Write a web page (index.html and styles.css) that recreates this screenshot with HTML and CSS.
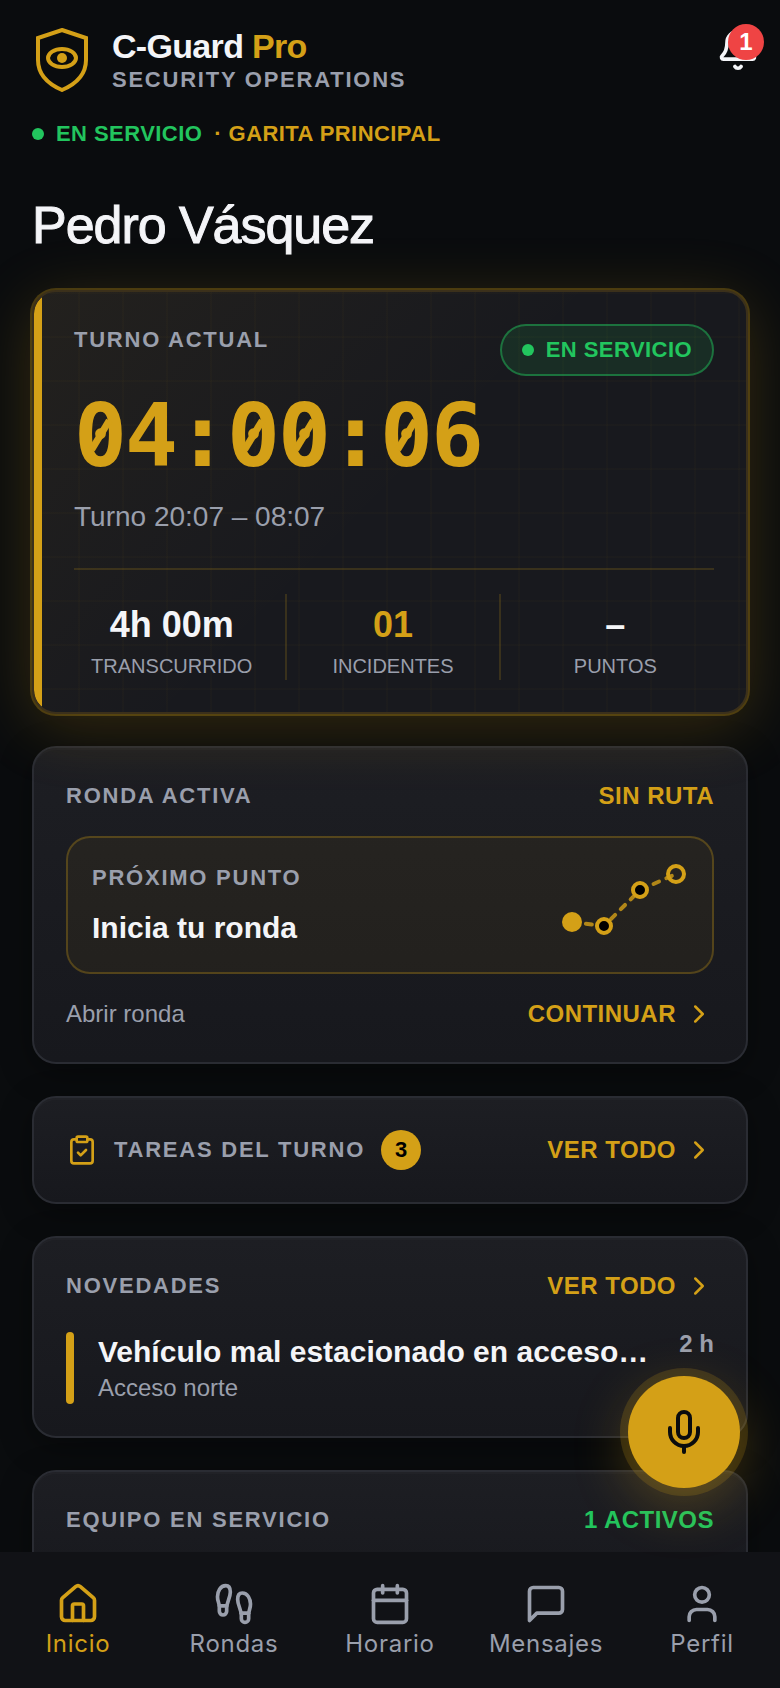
FILE: index.html
```html
<!DOCTYPE html>
<html lang="es">
<head>
  <meta charset="UTF-8">
  <meta name="viewport" content="width=device-width, initial-scale=1">
  <title>C-Guard Pro</title>
  <link rel="stylesheet" href="styles.css">
</head>
<body>

<div class="app">
  <main class="content">

    <header class="topbar">
      <svg class="logo" viewBox="0 0 60 64" fill="none" stroke="currentColor" stroke-width="4">
        <path d="M30 2L54 10V32C54 46 44 56 30 62C16 56 6 46 6 32V10Z"/>
        <ellipse cx="30" cy="30" rx="14" ry="9"/>
        <circle cx="30" cy="30" r="5" fill="currentColor" stroke="none"/>
      </svg>
      <div class="brand">
        <div class="brand-name">C-Guard <span>Pro</span></div>
        <div class="brand-sub">SECURITY OPERATIONS</div>
      </div>
      <button class="bell" aria-label="Notificaciones">
        <svg class="icon" viewBox="0 0 24 24">
          <path d="M10.3 21a2 2 0 0 0 3.4 0"/>
          <path d="M3.3 15.3A1 1 0 0 0 4 17h16a1 1 0 0 0 .7-1.7C19.4 14 18 12.500 18 8A6 6 0 0 0 6 8c0 4.500-1.400 6-2.700 7.300"/>
        </svg>
        <span class="bell-count">1</span>
      </button>
    </header>

    <div class="status">
      <span class="dot"></span>
      <span class="green">EN SERVICIO</span>
      <span class="gold">· GARITA PRINCIPAL</span>
    </div>

    <h1>Pedro Vásquez</h1>

    <section class="card hero">
      <div class="row hero-top">
        <h2 class="label">TURNO ACTUAL</h2>
        <div class="pill"><span class="dot"></span>EN SERVICIO</div>
      </div>
      <div class="timer"><span class="zero">0</span>4:<span class="zero">0</span><span class="zero">0</span>:<span class="zero">0</span>6</div>
      <div class="shift">Turno 20:07 – 08:07</div>
      <div class="stats">
        <div class="stat">
          <div class="stat-value">4h 00m</div>
          <div class="stat-label">TRANSCURRIDO</div>
        </div>
        <div class="stat">
          <div class="stat-value gold">01</div>
          <div class="stat-label">INCIDENTES</div>
        </div>
        <div class="stat">
          <div class="stat-value">–</div>
          <div class="stat-label">PUNTOS</div>
        </div>
      </div>
    </section>

    <section class="card">
      <div class="row">
        <h2 class="label">RONDA ACTIVA</h2>
        <span class="action">SIN RUTA</span>
      </div>
      <div class="next-point">
        <div>
          <div class="label">PRÓXIMO PUNTO</div>
          <div class="item-title">Inicia tu ronda</div>
        </div>
        <svg class="route" viewBox="0 0 128 86" fill="none" stroke="currentColor" stroke-width="4">
          <path d="M12 60L44 64L80 28L116 12" stroke-linecap="round" stroke-dasharray="6 8" opacity=".8"/>
          <circle cx="12" cy="60" r="10" fill="currentColor" stroke="none"/>
          <circle cx="44" cy="64" r="7" fill="#000"/>
          <circle cx="80" cy="28" r="7" fill="#000"/>
          <circle cx="116" cy="12" r="8"/>
        </svg>
      </div>
      <div class="row">
        <span class="sub">Abrir ronda</span>
        <a class="action" href="#">CONTINUAR
          <svg class="icon chevron" viewBox="0 0 24 24"><path d="M9 18l6-6-6-6"/></svg>
        </a>
      </div>
    </section>

    <section class="card">
      <div class="row tasks">
        <svg class="icon clipboard" viewBox="0 0 24 24">
          <rect x="8" y="2" width="8" height="4" rx="1"/>
          <path d="M16 4h2a2 2 0 0 1 2 2v14a2 2 0 0 1-2 2H6a2 2 0 0 1-2-2V6a2 2 0 0 1 2-2h2"/>
          <path d="M9 14l2 2 4-4"/>
        </svg>
        <h2 class="label">TAREAS DEL TURNO</h2>
        <span class="count">3</span>
        <a class="action" href="#">VER TODO
          <svg class="icon chevron" viewBox="0 0 24 24"><path d="M9 18l6-6-6-6"/></svg>
        </a>
      </div>
    </section>

    <section class="card">
      <div class="row">
        <h2 class="label">NOVEDADES</h2>
        <a class="action" href="#">VER TODO
          <svg class="icon chevron" viewBox="0 0 24 24"><path d="M9 18l6-6-6-6"/></svg>
        </a>
      </div>
      <div class="news">
        <div class="news-text">
          <div class="item-title">Vehículo mal estacionado en acceso…</div>
          <div class="sub">Acceso norte</div>
        </div>
        <time>2 h</time>
      </div>
    </section>

    <section class="card team">
      <div class="row">
        <h2 class="label">EQUIPO EN SERVICIO</h2>
        <span class="action green">1 ACTIVOS</span>
      </div>
    </section>

  </main>

  <button class="fab" aria-label="Hablar">
    <svg class="icon" viewBox="0 0 24 24">
      <path d="M12 19v3"/>
      <path d="M19 10v2a7 7 0 0 1-14 0v-2"/>
      <rect x="9" y="2" width="6" height="13" rx="3"/>
    </svg>
  </button>

  <nav class="tabs">
    <a class="tab active" href="#">
      <svg class="icon" viewBox="0 0 24 24">
        <path d="M15 21v-8a1 1 0 0 0-1-1h-4a1 1 0 0 0-1 1v8"/>
        <path d="M3 10a2 2 0 0 1 .7-1.500l7-6a2 2 0 0 1 2.600 0l7 6A2 2 0 0 1 21 10v9a2 2 0 0 1-2 2H5a2 2 0 0 1-2-2z"/>
      </svg>
      Inicio
    </a>
    <a class="tab" href="#">
      <svg class="icon" viewBox="0 0 24 24">
        <path d="M4 16v-2.380C4 11.500 2.970 10.500 3 8c.03-2.720 1.490-6 4.500-6C9.370 2 10 3.800 10 5.500c0 3.110-2 5.660-2 8.680V16a2 2 0 1 1-4 0Z"/>
        <path d="M20 20v-2.380c0-2.120 1.030-3.120 1-5.620-.03-2.720-1.490-6-4.500-6C14.630 6 14 7.800 14 9.500c0 3.110 2 5.660 2 8.680V20a2 2 0 1 0 4 0Z"/>
        <path d="M16 17h4"/>
        <path d="M4 13h4"/>
      </svg>
      Rondas
    </a>
    <a class="tab" href="#">
      <svg class="icon" viewBox="0 0 24 24">
        <path d="M8 2v4"/>
        <path d="M16 2v4"/>
        <rect x="3" y="4" width="18" height="18" rx="2"/>
        <path d="M3 10h18"/>
      </svg>
      Horario
    </a>
    <a class="tab" href="#">
      <svg class="icon" viewBox="0 0 24 24">
        <path d="M21 15a2 2 0 0 1-2 2H7l-4 4V5a2 2 0 0 1 2-2h14a2 2 0 0 1 2 2z"/>
      </svg>
      Mensajes
    </a>
    <a class="tab" href="#">
      <svg class="icon" viewBox="0 0 24 24">
        <path d="M19 21v-2a4 4 0 0 0-4-4H9a4 4 0 0 0-4 4v2"/>
        <circle cx="12" cy="7" r="4"/>
      </svg>
      Perfil
    </a>
  </nav>
</div>

</body>
</html>
```

FILE: styles.css
```css
:root {
  --bg: #0a0c0e;
  --gold: #d4a017;
  --green: #22c55e;
  --text: #f4f5f8;
  --muted: #9a9fac;
}

* {
  box-sizing: border-box;
}

body {
  margin: 0;
  background: var(--bg);
  color: var(--text);
  font-family: "Liberation Sans", Arial, sans-serif;
}

h1, h2 {
  margin: 0;
}

a {
  text-decoration: none;
}

button {
  border: none;
  padding: 0;
  cursor: pointer;
}

.app {
  position: relative;
  display: flex;
  flex-direction: column;
  height: 100vh;
}

.content {
  flex: 1;
  min-height: 0;
  padding: 24px 32px 32px;
  overflow-y: auto;
  scrollbar-width: none;
}

.icon {
  display: block;
  width: 44px;
  height: 44px;
  fill: none;
  stroke: currentColor;
  stroke-width: 2;
  stroke-linecap: round;
  stroke-linejoin: round;
}

.gold {
  color: var(--gold);
}

.green {
  color: var(--green);
}

/* header */
.topbar {
  display: flex;
  align-items: flex-start;
  height: 84px;
}

.logo {
  width: 60px;
  height: 64px;
  margin: 4px 20px 0 0;
  color: var(--gold);
}

.brand-name {
  font-size: 34px;
  line-height: 44px;
  font-weight: bold;
  letter-spacing: -0.02em;
}

.brand-name span {
  color: var(--gold);
}

.brand-sub {
  font-size: 22px;
  line-height: 24px;
  font-weight: bold;
  letter-spacing: 0.08em;
  color: var(--muted);
}

.bell {
  position: relative;
  margin: 4px -12px 0 auto;
  background: none;
  color: var(--text);
}

.bell-count {
  position: absolute;
  top: -4px;
  right: -4px;
  width: 36px;
  height: 36px;
  border-radius: 50%;
  background: #ef4444;
  color: #fff;
  font: bold 24px/36px "Liberation Sans", Arial, sans-serif;
  text-align: center;
}

.status {
  display: flex;
  align-items: center;
  gap: 12px;
  margin-top: 12px;
  font-size: 22px;
  line-height: 28px;
  font-weight: bold;
  letter-spacing: 0.02em;
}

.dot {
  width: 12px;
  height: 12px;
  border-radius: 50%;
  background: var(--green);
}

h1 {
  margin: 44px 0 32px;
  font-size: 52px;
  line-height: 66px;
  font-weight: normal;
  letter-spacing: -0.02em;
  -webkit-text-stroke: 1px currentColor;
}

/* cards */
.card {
  margin-bottom: 32px;
  padding: 32px;
  border: 2px solid #2a2c33;
  border-radius: 24px;
  background: linear-gradient(#1d1e23, #17181d);
  box-shadow: 0 8px 32px rgba(0, 0, 0, 0.35), inset 0 2px 0 rgba(255, 255, 255, 0.02);
}

.row {
  display: flex;
  align-items: center;
  justify-content: space-between;
}

.label {
  font-size: 22px;
  line-height: 32px;
  font-weight: bold;
  letter-spacing: 0.08em;
  color: var(--muted);
}

.action {
  display: flex;
  align-items: center;
  gap: 8px;
  font-size: 24px;
  line-height: 32px;
  font-weight: bold;
  letter-spacing: 0.02em;
  color: var(--gold);
}

.action.green {
  color: var(--green);
}

.chevron {
  width: 30px;
  height: 30px;
}

.item-title {
  font-size: 30px;
  line-height: 40px;
  font-weight: bold;
}

.sub {
  font-size: 24px;
  line-height: 32px;
  color: var(--muted);
}

.hero {
  position: relative;
  z-index: 1;
  padding-left: 40px;
  border-color: #3b301b;
  background:
    linear-gradient(var(--gold), var(--gold)) 0 0 / 8px 100% no-repeat padding-box,
    linear-gradient(90deg, rgba(212, 160, 23, 0.025) 2px, transparent 2px) 0 0 / 44px 44px padding-box,
    linear-gradient(rgba(212, 160, 23, 0.025) 2px, transparent 2px) 0 0 / 44px 44px padding-box,
    linear-gradient(135deg, rgba(212, 160, 23, 0.06), transparent 50%),
    #18191e;
  box-shadow: 0 0 0 2px rgba(212, 160, 23, 0.28), 0 12px 64px rgba(212, 160, 23, 0.22);
}

.hero-top {
  align-items: flex-start;
}

.pill {
  display: flex;
  align-items: center;
  gap: 12px;
  height: 52px;
  padding: 0 20px;
  border: 2px solid rgba(34, 197, 94, 0.45);
  border-radius: 26px;
  background: rgba(34, 197, 94, 0.12);
  color: var(--green);
  font-size: 22px;
  font-weight: bold;
  letter-spacing: 0.02em;
}

.timer {
  margin-top: 14px;
  font-family: "DejaVu Sans Mono", monospace;
  font-size: 88px;
  line-height: 92px;
  font-weight: bold;
  letter-spacing: -2px;
  color: var(--gold);
}

/* slashed zero */
.zero {
  display: inline-block;
  position: relative;
}

.zero::after {
  content: "";
  position: absolute;
  top: 28px;
  left: 23px;
  width: 7px;
  height: 34px;
  background: var(--gold);
  transform: rotate(31deg);
}

.shift {
  margin: 15px 0 31px;
  font-size: 28px;
  line-height: 40px;
  color: var(--muted);
}

.stats {
  display: grid;
  grid-template-columns: repeat(3, 1fr);
  padding-top: 24px;
  border-top: 2px solid rgba(212, 160, 23, 0.18);
}

.stat {
  padding: 10px 16px 2px;
  border-right: 2px solid rgba(212, 160, 23, 0.18);
  text-align: center;
}

.stat:first-child {
  padding-left: 0;
}

.stat:last-child {
  padding-right: 0;
  border-right: none;
}

.stat-value {
  font-size: 36px;
  line-height: 42px;
  font-weight: bold;
}

.stat-label {
  margin-top: 8px;
  font-size: 20px;
  line-height: 24px;
  color: var(--muted);
}

/* active round */
.next-point {
  display: flex;
  align-items: center;
  justify-content: space-between;
  margin: 24px 0;
  padding: 24px;
  border: 2px solid rgba(212, 160, 23, 0.28);
  border-radius: 24px;
  background: rgba(212, 160, 23, 0.06);
}

.next-point .item-title {
  margin-top: 14px;
}

.route {
  width: 128px;
  height: 86px;
  color: var(--gold);
}

/* tasks */
.tasks {
  gap: 16px;
}

.tasks .action {
  margin-left: auto;
}

.clipboard {
  width: 32px;
  height: 32px;
  color: var(--gold);
}

.count {
  width: 40px;
  height: 40px;
  border-radius: 50%;
  background: var(--gold);
  color: #000;
  font-size: 22px;
  line-height: 40px;
  font-weight: bold;
  text-align: center;
}

/* news */
.news {
  display: flex;
  align-items: flex-start;
  justify-content: space-between;
  margin-top: 30px;
}

.news-text {
  position: relative;
  padding-left: 32px;
}

.news-text::before {
  content: "";
  position: absolute;
  top: 0;
  bottom: 0;
  left: 0;
  width: 8px;
  border-radius: 4px;
  background: var(--gold);
}

.news time {
  font-size: 24px;
  line-height: 24px;
  font-weight: bold;
  color: var(--muted);
}

.team {
  min-height: 132px;
  margin-bottom: 0;
}

/* floating button */
.fab {
  position: absolute;
  right: 40px;
  bottom: 200px;
  z-index: 2;
  display: flex;
  align-items: center;
  justify-content: center;
  width: 112px;
  height: 112px;
  border-radius: 50%;
  background: var(--gold);
  color: #0a0c0e;
  box-shadow: 0 0 0 8px rgba(212, 160, 23, 0.18), 0 16px 56px rgba(212, 160, 23, 0.3);
}

.fab .icon {
  width: 48px;
  height: 48px;
}

/* bottom tabs */
.tabs {
  position: relative;
  z-index: 1;
  display: flex;
  height: 136px;
  padding-top: 30px;
  background: #111216;
}

.tab {
  flex: 1;
  display: flex;
  flex-direction: column;
  align-items: center;
  gap: 2px;
  font-family: Inter, sans-serif;
  font-size: 24px;
  line-height: 32px;
  letter-spacing: 0.03em;
  color: var(--muted);
}

.tab.active {
  color: var(--gold);
}
```
